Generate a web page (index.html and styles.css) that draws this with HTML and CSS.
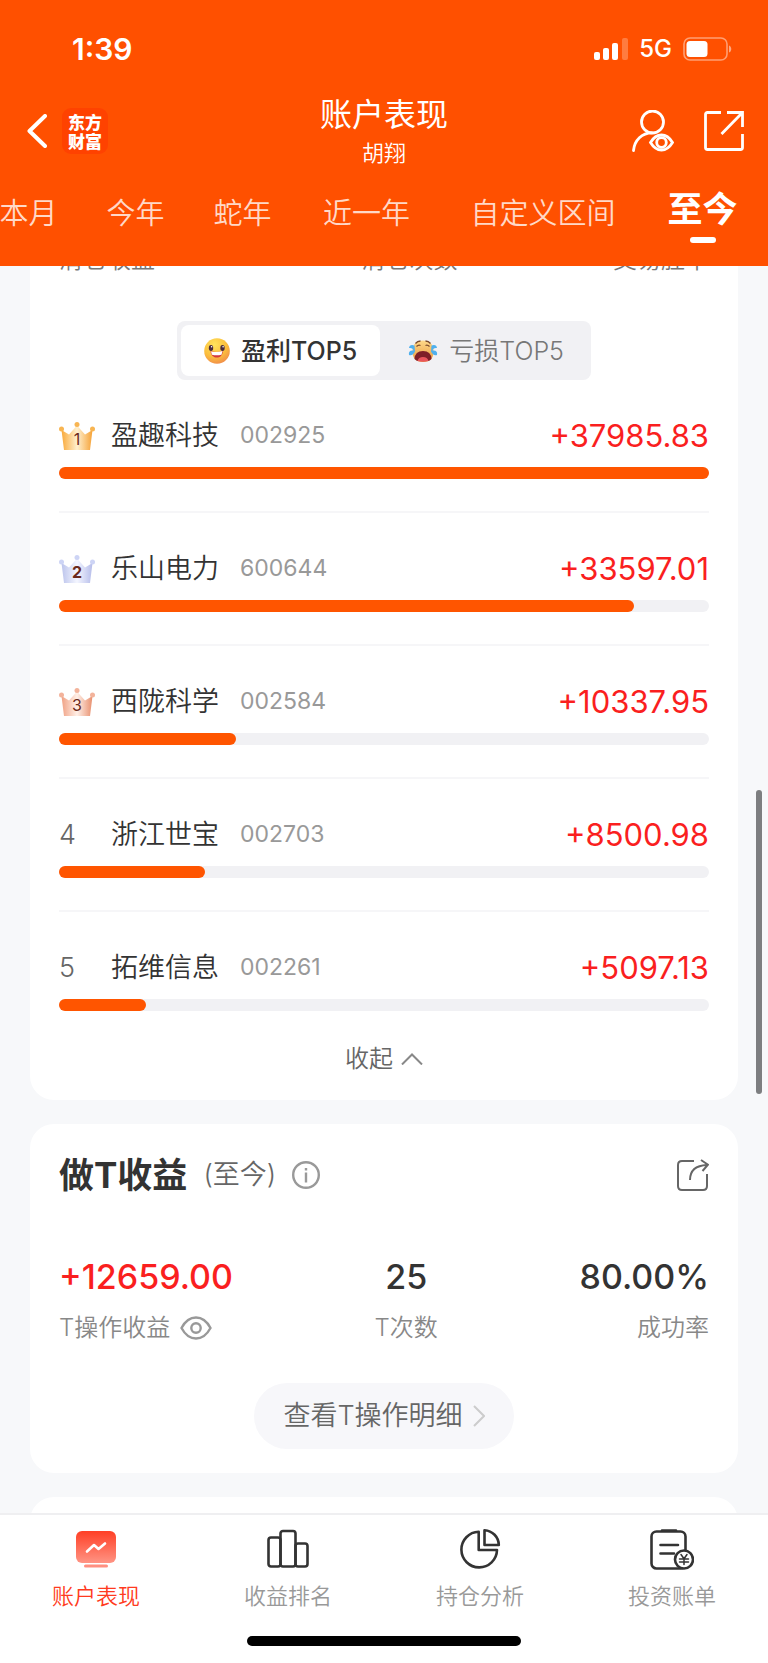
FILE: index.html
```html
<!DOCTYPE html>
<html lang="zh-CN">
<head>
<meta charset="utf-8">
<meta name="viewport" content="width=device-width, initial-scale=1">
<title>账户表现</title>
<link rel="stylesheet" href="styles.css">
</head>
<body>
<div class="app">
  <header class="header">
    <div class="status">
      <span class="status-time">1:39</span>
      <div class="status-right">
        <svg class="signal" viewBox="0 0 34 22" aria-hidden="true">
          <rect x="0" y="14" width="6" height="8" rx="2"/><rect x="9" y="10" width="6" height="12" rx="2"/><rect x="18" y="5" width="6" height="17" rx="2"/><rect x="28" y="0" width="6" height="22" rx="2" opacity=".25"/>
        </svg>
        <span class="status-net">5G</span>
        <svg class="battery" viewBox="0 0 49 24" aria-hidden="true">
          <rect x="1" y="1" width="43" height="22" rx="6" fill="none" stroke="#fff" stroke-width="1.6" opacity=".45"/>
          <rect x="3.500" y="4" width="21" height="16" rx="3.500"/>
          <path d="M46 8.500c3 1 3 6 0 7z" opacity=".5"/>
        </svg>
      </div>
    </div>
    <div class="nav">
      <div class="nav-side nav-back">
        <button class="icon-btn" aria-label="返回"><svg class="back" viewBox="0 0 20 34"><path d="M18 2 2.500 17 18 32"/></svg></button>
        <span class="brand">东方<br>财富</span>
      </div>
      <div class="nav-title">
        <h1>账户表现</h1>
        <p>胡翔</p>
      </div>
      <div class="nav-side nav-actions">
        <button class="icon-btn" aria-label="查看用户"><svg class="user" viewBox="0 0 42 42"><circle cx="20.500" cy="12" r="11"/><path d="M1.500 40.500C2.500 30 10 22.800 20 22.800"/><path d="M18.500 32.500c6-10 16-10 22 0-6 10-16 10-22 0z"/><circle cx="29.500" cy="32.500" r="4.800"/></svg></button>
        <button class="icon-btn" aria-label="分享"><svg class="open" viewBox="0 0 40 40"><path d="M17 1.500H3.500Q1.500 1.500 1.500 3.500V36.500Q1.500 38.500 3.500 38.500H36.500Q38.500 38.500 38.500 36.500V23M23 1.500H38.500V16M38 2 17.500 23"/></svg></button>
      </div>
    </div>
    <nav class="periods">
      <button class="period">本月</button>
      <button class="period">今年</button>
      <button class="period">蛇年</button>
      <button class="period period-mid">近一年</button>
      <button class="period period-long">自定义区间</button>
      <button class="period period-active" aria-current="true">至今</button>
    </nav>
  </header>

  <main class="content">
    <section class="card card-rank">
      <div class="labels">
        <span class="label-first">清仓收益</span><span>清仓次数</span><span>交易胜率</span>
      </div>
      <div class="segment">
        <button class="segment-item segment-active">
          <svg class="emoji" viewBox="0 0 26 26" aria-hidden="true">
            <defs><radialGradient id="smile" cx=".4" cy=".25" r=".8"><stop offset="0" stop-color="#ffe45c"/><stop offset=".6" stop-color="#fbbd3d"/><stop offset="1" stop-color="#f08a4b"/></radialGradient></defs>
            <circle cx="13" cy="13" r="12.800" fill="url(#smile)"/>
            <ellipse cx="7" cy="10" rx="2.200" ry="2.900" fill="#4a2b3c"/><ellipse cx="18.500" cy="10" rx="2.200" ry="2.900" fill="#4a2b3c"/>
            <circle cx="7.600" cy="8.800" r=".8" fill="#fff"/><circle cx="19.100" cy="8.800" r=".8" fill="#fff"/>
            <path d="M6.500 13.200q6.500 1.500 12.500-.3c-.5 4.500-3 6.600-6.200 6.600s-5.800-2.300-6.300-6.300z" fill="#d3383d"/>
            <path d="M7 13.400q6 1.300 11.500-.3l-1 3.600q-5 1-9.600 0z" fill="#fff"/>
          </svg>
          <span>盈利TOP5</span>
        </button>
        <button class="segment-item segment-idle">
          <svg class="emoji emoji-cry" viewBox="0 0 30 26" aria-hidden="true">
            <defs><linearGradient id="cry" x1="0" y1="0" x2="0" y2="1"><stop offset="0" stop-color="#ffd98a"/><stop offset="1" stop-color="#e8993e"/></linearGradient></defs>
            <path d="M15 2.500C21 2.500 25 6 25.500 12c.5 8-3 12-10.500 12S4 20 4.500 12C5 6 9 2.500 15 2.500z" fill="url(#cry)"/>
            <path d="M6.500 7.500Q1.500 6 1 10q4-.5 4.500 2.500Q0 12 1 17q4 1 6-3.500zM23.500 7.500Q28.500 6 29 10q-4-.5-4.500 2.500Q30 12 29 17q-4 1-6-3.500z" fill="#4fb0ee"/>
            <path d="M7.500 5.500q2-2.500 5-2.500M22.500 5.500q-2-2.500-5-2.500M8.500 8.500q2-2 4-1M21.500 8.500q-2-2-4-1" fill="none" stroke="#7b4a2c" stroke-width="1.300"/>
            <path d="M6.500 21q.5-8 8.500-8t8.500 8q-2 2-3.500 2H10q-1.500 0-3.500-2z" fill="#7e1f28"/>
            <path d="M9.500 23q1-4 5.500-4t5.500 4q-5.500 1.500-11 0z" fill="#e8555c"/>
          </svg>
          <span>亏损TOP5</span>
        </button>
      </div>

      <ol class="ranks">
        <li class="rank">
          <div class="rank-line">
            <span class="rank-no">
              <svg class="crown" viewBox="0 0 36 28" aria-hidden="true">
                <defs><linearGradient id="gold"><stop offset="0" stop-color="#f9a93a"/><stop offset=".5" stop-color="#fff0cf"/><stop offset="1" stop-color="#f6a236"/></linearGradient></defs>
                <path d="M2.500 8 10 12.500 18 3.500l8 9L33.500 8l-2.500 20H5z" fill="url(#gold)"/><g fill="#f8b552"><circle cx="2.500" cy="7" r="2.500"/><circle cx="18" cy="2.500" r="2.500"/><circle cx="33.500" cy="7" r="2.500"/></g>
                <text x="18" y="23" class="crown-no">1</text>
              </svg>
            </span>
            <span class="rank-name">盈趣科技</span><span class="rank-code">002925</span><span class="rank-amount">+37985.83</span>
          </div>
          <div class="bar"><div class="bar-fill" style="width:100%"></div></div>
        </li>
        <li class="rank">
          <div class="rank-line">
            <span class="rank-no">
              <svg class="crown" viewBox="0 0 36 28" aria-hidden="true">
                <defs><linearGradient id="silver"><stop offset="0" stop-color="#bcc4ec"/><stop offset=".5" stop-color="#f4f6ff"/><stop offset="1" stop-color="#b6bdea"/></linearGradient></defs>
                <path d="M2.500 8 10 12.500 18 3.500l8 9L33.500 8l-2.500 20H5z" fill="url(#silver)"/><g fill="#cdd4f5"><circle cx="2.500" cy="7" r="2.500"/><circle cx="18" cy="2.500" r="2.500"/><circle cx="33.500" cy="7" r="2.500"/></g>
                <text x="18" y="23" class="crown-no crown-no-bold">2</text>
              </svg>
            </span>
            <span class="rank-name">乐山电力</span><span class="rank-code">600644</span><span class="rank-amount">+33597.01</span>
          </div>
          <div class="bar"><div class="bar-fill" style="width:88.5%"></div></div>
        </li>
        <li class="rank">
          <div class="rank-line">
            <span class="rank-no">
              <svg class="crown" viewBox="0 0 36 28" aria-hidden="true">
                <defs><linearGradient id="bronze"><stop offset="0" stop-color="#f0a184"/><stop offset=".5" stop-color="#fff0e8"/><stop offset="1" stop-color="#e88f6e"/></linearGradient></defs>
                <path d="M2.500 8 10 12.500 18 3.500l8 9L33.500 8l-2.500 20H5z" fill="url(#bronze)"/><g fill="#f3b39b"><circle cx="2.500" cy="7" r="2.500"/><circle cx="18" cy="2.500" r="2.500"/><circle cx="33.500" cy="7" r="2.500"/></g>
                <text x="18" y="23" class="crown-no">3</text>
              </svg>
            </span>
            <span class="rank-name">西陇科学</span><span class="rank-code">002584</span><span class="rank-amount">+10337.95</span>
          </div>
          <div class="bar"><div class="bar-fill" style="width:27.2%"></div></div>
        </li>
        <li class="rank">
          <div class="rank-line">
            <span class="rank-no">4</span><span class="rank-name">浙江世宝</span><span class="rank-code">002703</span><span class="rank-amount">+8500.98</span>
          </div>
          <div class="bar"><div class="bar-fill" style="width:22.4%"></div></div>
        </li>
        <li class="rank">
          <div class="rank-line">
            <span class="rank-no">5</span><span class="rank-name">拓维信息</span><span class="rank-code">002261</span><span class="rank-amount">+5097.13</span>
          </div>
          <div class="bar"><div class="bar-fill" style="width:13.4%"></div></div>
        </li>
      </ol>
      <button class="collapse">收起<svg class="caret-up" viewBox="0 0 22 12" aria-hidden="true"><path d="M1 11.500 11 1.500 21 11.500"/></svg></button>
    </section>

    <section class="card card-t">
      <div class="card-head">
        <h2>做T收益</h2>
        <span class="card-range">(至今)</span>
        <button class="icon-btn" aria-label="说明"><svg class="info" viewBox="0 0 28 28"><circle cx="14" cy="14" r="12.800"/><path d="M14 11.500V21.500M14 7V9.500"/></svg></button>
        <button class="icon-btn share-btn" aria-label="分享"><svg class="share" viewBox="0 0 32 32"><path d="M17 2H5Q1 2 1 6V27Q1 31 5 31H26Q30 31 30 27V15M13 21C13 12 18 6.500 30 6M24 1 31 5.700 25.500 12"/></svg></button>
      </div>
      <div class="stats">
        <div class="stat stat-left">
          <strong class="stat-value stat-up">+12659.00</strong>
          <span class="stat-label">T操作收益<button class="icon-btn" aria-label="隐藏金额"><svg class="eye" viewBox="0 0 32 24"><path d="M1.500 12C9-2 23-2 30.500 12 23 26 9 26 1.500 12z"/><circle cx="16" cy="12" r="4.700"/></svg></button></span>
        </div>
        <div class="stat stat-center">
          <strong class="stat-value">25</strong>
          <span class="stat-label">T次数</span>
        </div>
        <div class="stat stat-right">
          <strong class="stat-value">80.00%</strong>
          <span class="stat-label">成功率</span>
        </div>
      </div>
      <a class="detail" href="#">查看T操作明细<svg class="caret-right" viewBox="0 0 12 22" aria-hidden="true"><path d="M1 1 11 11 1 21"/></svg></a>
    </section>

    <section class="card card-next"></section>
    <div class="scroll-thumb"></div>
  </main>

  <footer class="footer">
    <nav class="tabs">
      <a class="tab tab-active" href="#">
        <svg class="tab-icon" viewBox="0 0 44 44" aria-hidden="true">
          <defs><linearGradient id="screen" x1="0" y1="0" x2="0" y2="1"><stop offset="0" stop-color="#ff3f25"/><stop offset="1" stop-color="#ff9484"/></linearGradient></defs>
          <rect x="2" y="3" width="40" height="32" rx="6" fill="url(#screen)"/><rect x="10" y="36.500" width="24" height="3" rx="1.500" fill="#ff8f80"/>
          <path d="M13 23.500 20 17 24.500 21 31 15.500" fill="none" stroke="#fff" stroke-width="2.600" stroke-linecap="round" stroke-linejoin="round"/>
        </svg>
        <span>账户表现</span>
      </a>
      <a class="tab" href="#">
        <svg class="tab-icon line-icon" viewBox="0 0 44 44" aria-hidden="true"><rect x="2.500" y="9.500" width="12" height="29" rx="2.500"/><rect x="14.500" y="3" width="15" height="35.500" rx="2.500"/><rect x="29.500" y="15.500" width="12" height="23" rx="2.500"/></svg>
        <span>收益排名</span>
      </a>
      <a class="tab" href="#">
        <svg class="tab-icon line-icon" viewBox="0 0 44 44" aria-hidden="true"><path d="M20.700 3.800A17.800 17.800 0 1 0 39 22H20.700z"/><path d="M26.500 2.200A15 15 0 0 1 40.800 17H26.500z"/></svg>
        <span>持仓分析</span>
      </a>
      <a class="tab" href="#">
        <svg class="tab-icon line-icon" viewBox="0 0 44 44" aria-hidden="true"><rect x="1.500" y="3.500" width="34" height="37" rx="5"/><path d="M12 2.500H26M10.500 17H28M10.500 25.500H24"/><circle cx="34" cy="31.500" r="9" fill="#fff"/><path d="M31 26.500l3 4.200 3-4.200M34 30.500V36.500M29.500 31H38.500M29.500 34H38.500" stroke-width="1.500"/></svg>
        <span>投资账单</span>
      </a>
    </nav>
    <div class="home-bar"></div>
  </footer>
</div>
</body>
</html>
```

FILE: styles.css
```css
* { box-sizing: border-box; }

body {
  margin: 0;
  color: #333;
  background: #f7f8fa;
  font-family: Inter, "Noto Sans CJK SC", sans-serif;
  font-weight: 350;
  line-height: 1.2;
}

h1, h2, p, ol { margin: 0; padding: 0; }
ol { list-style: none; }
a { color: inherit; text-decoration: none; }
svg { display: block; flex: none; }

button {
  padding: 0;
  border: 0;
  background: none;
  color: inherit;
  font: inherit;
}

.icon-btn svg, .back, .caret-up, .caret-right { fill: none; stroke: currentColor; }

.app {
  display: flex;
  flex-direction: column;
  height: 100vh;
}

/* Header */
.header {
  flex: none;
  background: #ff5000;
  color: #fff;
  overflow: hidden;
}

.status {
  display: flex;
  align-items: center;
  justify-content: space-between;
  height: 98px;
  padding: 0 36px 0 72px;
}
.status-time { font-size: 30px; font-weight: 600; }
.status-right { display: flex; align-items: center; gap: 11px; }
.status-net { font-size: 24px; font-weight: 500; }
.status-right svg { fill: #fff; }
.signal { width: 34px; height: 22px; }
.battery { width: 49px; height: 24px; }

.nav {
  display: grid;
  grid-template-columns: 1fr auto 1fr;
  height: 74px;
  padding: 0 24px;
}
.nav-side { display: flex; align-items: center; gap: 15px; padding-bottom: 9px; }
.nav-side, .nav-title { height: 74px; }
.nav-back { padding-left: 3px; }
.nav-actions { justify-content: flex-end; gap: 30px; }
.back { width: 20px; height: 34px; stroke-width: 4; stroke-linecap: round; stroke-linejoin: round; }
.brand {
  width: 46px;
  height: 46px;
  padding-top: 4px;
  border-radius: 9px;
  background: #ff4200;
  font-family: "Noto Sans CJK SC", sans-serif;
  font-size: 17px;
  font-weight: 900;
  line-height: 19px;
  text-align: center;
}
.user { width: 42px; height: 42px; stroke-width: 2.8; stroke-linecap: round; }
.open { width: 40px; height: 40px; stroke-width: 2.8; }
.nav-title { text-align: center; }
.nav-title h1 { font-size: 32px; font-weight: 400; line-height: 34px; }
.nav-title p { font-size: 22px; line-height: 42px; }

.periods {
  display: flex;
  justify-content: flex-end;
  height: 94px;
  padding-right: 12px;
}
.period {
  flex: none;
  width: 107px;
  height: 84px;
  color: #ffd9c8;
  font-size: 29px;
  text-align: center;
  white-space: nowrap;
}
.period-mid { width: 141px; }
.period-long { width: 212px; }
.period-active {
  display: flex;
  flex-direction: column;
  align-items: center;
  gap: 7px;
  height: 72px;
  padding-top: 16px;
  color: #fff;
  font-size: 35px;
  font-weight: 700;
  line-height: 42px;
}
.period-active::after {
  content: "";
  width: 26px;
  height: 6px;
  border-radius: 3px;
  background: #fff;
}

/* Scrolling content */
.content {
  position: relative;
  flex: 1;
  min-height: 0;
  overflow: hidden;
  padding: 0 30px;
}
.card {
  margin-bottom: 24px;
  padding: 0 29px;
  border-radius: 24px;
  background: #fff;
}
.card-rank {
  display: flex;
  flex-direction: column;
  margin-top: -24px;
  padding-bottom: 21px;
}

.labels {
  display: flex;
  justify-content: space-between;
  color: #777;
  font-size: 24px;
  line-height: 36px;
}
.label-first { min-width: 147px; }

.segment {
  display: flex;
  align-self: center;
  height: 59px;
  margin-top: 43px;
  padding: 4px;
  border-radius: 8px;
  background: #f1f1f4;
  font-size: 25px;
}
.segment-item {
  display: flex;
  align-items: center;
  gap: 11px;
  padding: 0 23px;
  border-radius: 8px;
}
.segment-active { background: #fff; font-weight: 500; }
.segment-idle { padding-left: 28px; color: #777; }
.emoji { width: 26px; height: 26px; }
.emoji-cry { width: 30px; }

.rank { padding: 36px 0 32px; border-bottom: 2px solid #f6f6f8; }
.rank:last-child { padding-bottom: 0; border-bottom: 0; }
.rank-line {
  display: flex;
  align-items: center;
  height: 40px;
  margin-bottom: 11px;
}
.rank-no { width: 52px; color: #666; font-size: 27px; }
.crown { width: 36px; height: 28px; }
.crown-no { fill: #6b2a1c; font-size: 16px; font-weight: 400; text-anchor: middle; }
.crown-no-bold { font-weight: 700; }
.rank-name { font-size: 27px; }
.rank-code { margin-left: 21px; color: #999; font-size: 23px; font-weight: 400; }
.rank-amount { margin-left: auto; color: #fa1f1f; font-size: 31px; font-weight: 400; }
.bar { height: 12px; border-radius: 6px; background: #f1f1f4; }
.bar-fill { height: 12px; border-radius: 6px; background: #ff5500; }

.collapse {
  display: flex;
  align-items: center;
  align-self: center;
  gap: 8px;
  height: 40px;
  margin-top: 28px;
  color: #666;
  font-size: 24px;
}
.caret-up { width: 22px; height: 12px; stroke: #888; stroke-width: 2; }

/* T card */
.card-t { display: flex; flex-direction: column; padding-bottom: 24px; }
.card-head { display: flex; align-items: center; height: 102px; }
.card-head h2 { font-size: 35px; font-weight: 700; }
.card-range { margin: 0 16px; color: #666; font-size: 27px; }
.info { width: 28px; height: 28px; color: #999; stroke-width: 2.4; }
.share-btn { margin-left: auto; }
.share { width: 32px; height: 32px; color: #666; stroke-width: 2; }

.stats { display: flex; justify-content: space-between; padding-top: 28px; }
.stat { display: flex; flex-direction: column; }
.stat-center { align-items: center; }
.stat-right { align-items: flex-end; }
.stat-value { font-size: 34px; font-weight: 500; line-height: 46px; }
.stat-up { color: #fa1f1f; }
.stat-label {
  display: flex;
  align-items: center;
  gap: 10px;
  height: 56px;
  color: #888;
  font-size: 24px;
}
.eye { width: 32px; height: 24px; color: #999; stroke-width: 2.4; }

.detail {
  display: flex;
  align-items: center;
  align-self: center;
  gap: 10px;
  height: 66px;
  margin-top: 27px;
  padding: 0 29px;
  border-radius: 33px;
  background: #f7f7fa;
  color: #666;
  font-size: 27px;
}
.caret-right { width: 12px; height: 22px; stroke: #ccc; stroke-width: 2; }
.card-next { height: 120px; }

.scroll-thumb {
  position: absolute;
  top: 524px;
  right: 6px;
  width: 6px;
  height: 304px;
  border-radius: 3px;
  background: #7d7e80;
}

/* Bottom bar */
.footer { flex: none; border-top: 2px solid #efeff1; background: #fff; }
.tabs { display: grid; grid-template-columns: repeat(4, 1fr); height: 121px; }
.tab {
  display: flex;
  flex-direction: column;
  align-items: center;
  gap: 8px;
  padding-top: 13px;
  color: #999;
  font-size: 22px;
  line-height: 32px;
}
.tab-active { color: #ff3a20; }
.tab-icon { width: 44px; height: 44px; }
.line-icon { fill: none; stroke: #333; stroke-width: 2.6; stroke-linejoin: round; stroke-linecap: round; }
.home-bar {
  width: 274px;
  height: 10px;
  margin: 0 auto 17px;
  border-radius: 5px;
  background: #000;
}
```
